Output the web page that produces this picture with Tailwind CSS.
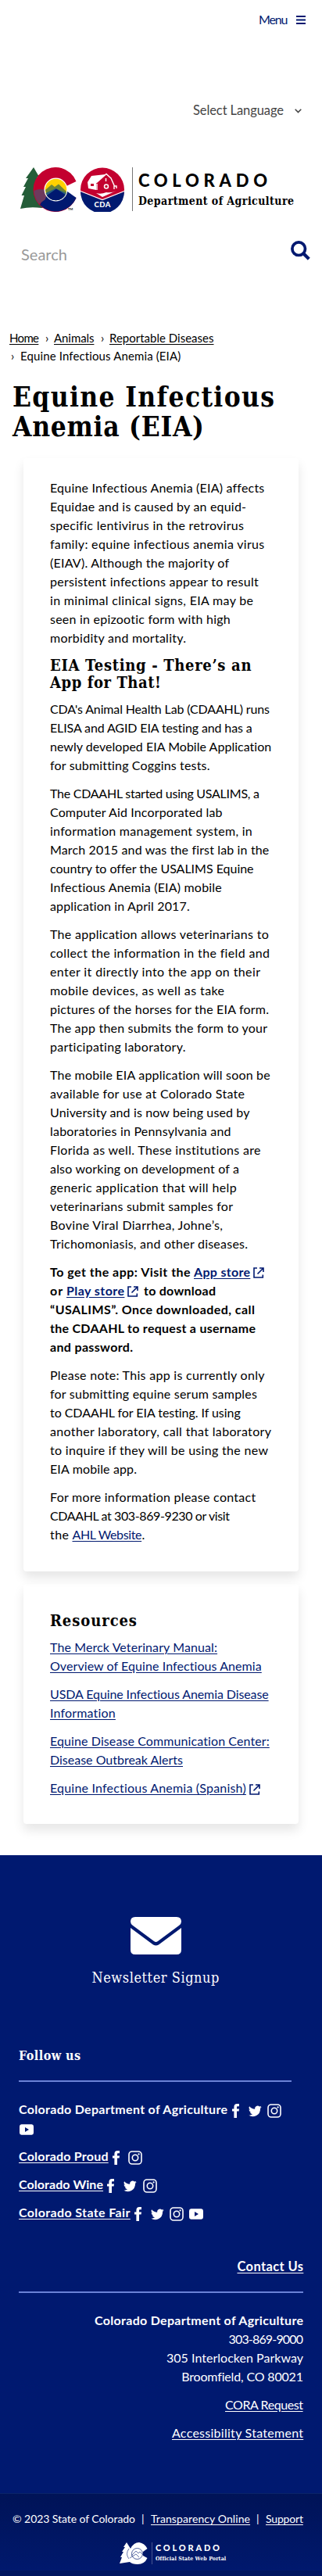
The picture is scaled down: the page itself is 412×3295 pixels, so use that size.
<!DOCTYPE html>
<html lang="en">
<head>
<meta charset="utf-8">
<title>Equine Infectious Anemia (EIA)</title>
<script src="https://cdn.jsdelivr.net/npm/@tailwindcss/browser@4"></script>
</head>
<body class="bg-white text-black font-['Lato','Noto_Sans',sans-serif] text-base leading-6 w-[412px] overflow-x-hidden">
<svg class="hidden">
  <symbol id="ext" viewBox="0 0 14 14"><path d="M5 1H1V13H12.3V9.5M8 1H13V6M13 1L5.5 8.5" fill="none" stroke="currentColor" stroke-width="1.6"/></symbol>
  <symbol id="fb" viewBox="0 0 9 18"><path d="M2.4 18V9.6H0V6.4H2.4V4.2C2.4 1.5 3.8 0 6.3 0H9V3.2H7.3C6.3 3.2 6 3.6 6 4.5V6.4H9L8.6 9.6H6V18Z" fill="currentColor"/></symbol>
  <symbol id="tw" viewBox="0 0 24 20"><path d="M23.6 2.4a9.6 9.6 0 0 1-2.8.8A4.8 4.8 0 0 0 22.9.5a9.700 9.700 0 0 1-3.100 1.200A4.850 4.850 0 0 0 11.600 6.100 13.700 13.700 0 0 1 1.600 1a4.850 4.850 0 0 0 1.500 6.500 4.800 4.800 0 0 1-2.200-.6 4.850 4.850 0 0 0 3.900 4.800 4.900 4.900 0 0 1-2.200.1 4.850 4.850 0 0 0 4.500 3.400A9.700 9.700 0 0 1 0 17.200 13.700 13.700 0 0 0 21.200 5z" fill="currentColor"/></symbol>
  <symbol id="ig" viewBox="0 0 18 18"><rect x="1" y="1" width="16" height="16" rx="4" fill="none" stroke="currentColor" stroke-width="1.600"/><circle cx="9" cy="9" r="3.700" fill="none" stroke="currentColor" stroke-width="1.600"/><circle cx="13.600" cy="4.400" r="1.100" fill="currentColor"/></symbol>
  <symbol id="yt" viewBox="0 0 18 14"><path fill-rule="evenodd" d="M2.500 .3H15.500Q18 .5 18 3V11Q18 13.500 15.500 13.700H2.500Q0 13.500 0 11V3Q0 .5 2.500 .3ZM7 4V10L12 7Z" fill="currentColor"/></symbol>
</svg>

<header class="h-[422px] flex flex-col">
  <div class="h-[50px] pt-[13px] pl-[331px] flex">
    <a class="text-[#001970] text-[16px] whitespace-nowrap w-[48px] shrink-0"><span data-w="37.5">Menu</span></a>
    <svg class="w-3 h-[11px] mt-[7px]" viewBox="0 0 12 11"><path d="M0 1H12M0 5.500H12M0 10H12" stroke="#001970" stroke-width="2"/></svg>
  </div>
  <div class="h-[164px] pt-[79px] pl-[247px] flex text-[#444]">
    <span class="whitespace-nowrap text-[16.5px] w-[130px] shrink-0"><span data-w="116">Select Language</span></span>
    <svg class="w-[9px] h-1.5 mt-[10px]" viewBox="0 0 9 6"><path d="M.7 .7L4.500 4.600L8.300 .7" fill="none" stroke="#444" stroke-width="1.500"/></svg>
  </div>
  <div class="h-[57px] pl-[25px] flex">
    <svg class="w-[144px] h-[57px] shrink-0" viewBox="0 0 144 57">
      <path d="M18 0L25 12H22.500L29 23H26L38 50L28 52Q14 50 1 53L6 36H2.500L8 25H5L11 14H8Z" fill="#245d38"/>
      <path d="M72.500 18A28.500 28.500 0 1 0 72.500 39L60 34H32V24L60 24Z" fill="#c3002f"/>
      <path d="M72.500 39A28.500 28.500 0 0 1 26 48L36 30H60Z" fill="#001970"/>
      <path d="M18.500 30Q26 26 36 30L33 41L25 47Q18.500 39 18.500 30Z" fill="#6d3a5d"/>
      <circle cx="46.500" cy="28.500" r="15" fill="#fff"/>
      <circle cx="46.500" cy="28.500" r="13.700" fill="#ffd100"/>
      <path d="M33 29L41 22L45 25L50 21.500L60 31Q59 41 46 42Q35 40 33 29Z" fill="#6b8537"/>
      <path d="M33.500 33L46 27L59.500 33Q56 42.200 46.500 42.200Q37 42.200 33.500 33Z" fill="#245d7e"/>
      <path d="M35 36L47 27.500L58.500 35Q54 42.200 46.500 42.200Q39 42.200 35 36Z" fill="#001970"/>
      <text x="62" y="55" font-size="4" font-weight="700" font-family="Lato">TM</text>
      <circle cx="106" cy="28.500" r="28" fill="#c3002f"/>
      <path d="M78 31L106 42L134 31A28 28 0 0 1 78 31Z" fill="#001970"/>
      <path d="M78 30.500L106 41.500L134 30.500" fill="none" stroke="#fff" stroke-width="1.300"/>
      <path d="M87 19L92 11L110 9L98 20V29L88 27ZM91 21V24H95V21Z" fill="#fff" fill-rule="evenodd"/>
      <path d="M98 20L111 8.500L117 14L121 23V28M99 29V21M121 24H124V27" fill="none" stroke="#fff" stroke-width="1.400"/>
      <circle cx="111" cy="24.500" r="2.500" fill="none" stroke="#fff" stroke-width="1.500"/><path d="M110.500 14V18" stroke="#fff" stroke-width="1.500"/>
      <path d="M98 33Q104 35 111 32Q118 33 124 30L106 38Z" fill="#fff"/>
      <text x="95.500" y="50.500" font-size="9.500" font-weight="900" fill="#fff" font-family="Lato" textLength="21">CDA</text>
    </svg>
    <div class="w-px bg-[#777] h-[56px] shrink-0"></div>
    <div class="pl-[7px] whitespace-nowrap">
      <div class="h-6 leading-6 pt-[5px] text-[22px] font-black"><span data-w="165">COLORADO</span></div>
      <div class="pt-[7px] text-[14px] font-bold font-['DejaVu_Serif_Condensed','DejaVu_Serif',serif]"><span data-w="199">Department of Agriculture</span></div>
    </div>
  </div>
  <div class="pl-[27px] pt-[37px] flex">
    <span class="w-[345px] shrink-0 pt-[5px] text-[20px] text-[#999]"><span data-w="59">Search</span></span>
    <svg class="w-[25px] h-[25px] shrink-0" viewBox="0 0 25 25"><circle cx="10.200" cy="10.200" r="8.300" fill="none" stroke="#001970" stroke-width="3.700"/><path d="M16 16L23.300 23.300" stroke="#001970" stroke-width="4.200"/></svg>
  </div>
</header>

<nav class="text-[15px] leading-[23px] pl-3 whitespace-nowrap h-[69px] -mt-px mb-px">
  <div class="flex"><a class="underline underline-offset-2 w-[46px] shrink-0"><span data-w="38">Home</span></a><span class="w-[11px] shrink-0">›</span><a class="underline underline-offset-2 w-[60px] shrink-0"><span data-w="51.500">Animals</span></a><span class="w-[11px] shrink-0">›</span><a class="underline underline-offset-2"><span data-w="133.500">Reportable Diseases</span></a></div>
  <div class="flex"><span class="w-[14px] shrink-0 pl-0.5">›</span><span data-w="205.500">Equine Infectious Anemia (EIA)</span></div>
</nav>

<main>
  <h1 class="text-[35px] leading-[38px] font-bold font-['DejaVu_Serif_Condensed','DejaVu_Serif',serif] pl-4 whitespace-nowrap h-[97px] -mt-0.5"><span data-w="335">Equine Infectious</span><br><span data-w="245">Anemia (EIA)</span></h1>

  <section class="mx-[30px] h-[1424px] pt-[26px] pl-[34px] shadow-[0_8px_14px_rgba(0,0,0,0.1)] rounded-sm flex flex-col gap-3 whitespace-nowrap">
    <p><span data-w="274">Equine Infectious Anemia (EIA) affects</span><br><span data-w="251">Equidae and is caused by an equid-</span><br><span data-w="248">specific lentivirus in the retrovirus</span><br><span data-w="274.500">family: equine infectious anemia virus</span><br><span data-w="229">(EIAV). Although the majority of</span><br><span data-w="267">persistent infections appear to result</span><br><span data-w="260">in minimal clinical signs, EIA may be</span><br><span data-w="231">seen in epizootic form with high</span><br><span data-w="174">morbidity and mortality.</span></p>
    <h2 class="text-[20px] leading-[22px] font-bold font-['DejaVu_Serif_Condensed','DejaVu_Serif',serif] -mb-[1.500px]"><span data-w="257.500">EIA Testing - There’s an</span><br><span data-w="142">App for That!</span></h2>
    <p><span data-w="281">CDA's Animal Health Lab (CDAAHL) runs</span><br><span data-w="259">ELISA and AGID EIA testing and has a</span><br><span data-w="283.500">newly developed EIA Mobile Application</span><br><span data-w="204">for submitting Coggins tests.</span></p>
    <p><span data-w="268">The CDAAHL started using USALIMS, a</span><br><span data-w="220.500">Computer Aid Incorporated lab</span><br><span data-w="259">information management system, in</span><br><span data-w="280">March 2015 and was the first lab in the</span><br><span data-w="260">country to offer the USALIMS Equine</span><br><span data-w="220">Infectious Anemia (EIA) mobile</span><br><span data-w="179">application in April 2017.</span></p>
    <p><span data-w="280">The application allows veterinarians to</span><br><span data-w="281">collect the information in the field and</span><br><span data-w="269">enter it directly into the app on their</span><br><span data-w="223">mobile devices, as well as take</span><br><span data-w="280">pictures of the horses for the EIA form.</span><br><span data-w="278">The app then submits the form to your</span><br><span data-w="174">participating laboratory.</span></p>
    <p><span data-w="282">The mobile EIA application will soon be</span><br><span data-w="249">available for use at Colorado State</span><br><span data-w="255.500">University and is now being used by</span><br><span data-w="231.500">laboratories in Pennsylvania and</span><br><span data-w="270">Florida as well. These institutions are</span><br><span data-w="242">also working on development of a</span><br><span data-w="239">generic application that will help</span><br><span data-w="234">veterinarians submit samples for</span><br><span data-w="221">Bovine Viral Diarrhea, Johne’s,</span><br><span data-w="253">Trichomoniasis, and other diseases.</span></p>
    <p class="font-bold"><span data-w="184">To get the app: Visit the&nbsp;</span><a class="underline underline-offset-2 text-[#001970]"><span data-w="72">App store</span></a><svg class="inline w-[14px] h-[14px] ml-1 text-[#001970]"><use href="#ext"/></svg><br><span data-w="21">or&nbsp;</span><a class="underline underline-offset-2 text-[#001970]"><span data-w="74">Play store</span></a><svg class="inline w-[14px] h-[14px] ml-1 mr-[7px] text-[#001970]"><use href="#ext"/></svg><span data-w="92">to download</span><br><span data-w="262">“USALIMS”. Once downloaded, call</span><br><span data-w="263">the CDAAHL to request a username</span><br><span data-w="106">and password.</span></p>
    <p><span data-w="274.500">Please note: This app is currently only</span><br><span data-w="264.500">for submitting equine serum samples</span><br><span data-w="244">to CDAAHL for EIA testing. If using</span><br><span data-w="283">another laboratory, call that laboratory</span><br><span data-w="279">to inquire if they will be using the new</span><br><span data-w="111">EIA mobile app.</span></p>
    <p><span data-w="263.500">For more information please contact</span><br><span data-w="230">CDAAHL at 303-869-9230 or visit</span><br><span data-w="28.500">the&nbsp;</span><a class="underline underline-offset-2 text-[#001970]"><span data-w="89">AHL Website</span></a>.</p>
  </section>

  <section class="mx-[30px] mt-4 h-[307px] pt-[36px] pl-[34px] shadow-[0_8px_14px_rgba(0,0,0,0.1)] rounded-sm whitespace-nowrap">
    <h2 class="text-[20px] leading-[22px] font-bold font-['DejaVu_Serif_Condensed','DejaVu_Serif',serif] mb-[11px]"><span data-w="111">Resources</span></h2>
    <ul class="flex flex-col gap-3 text-[#001970]">
      <li class="underline underline-offset-2"><span data-w="214">The Merck Veterinary Manual:</span><br><span data-w="271">Overview of Equine Infectious Anemia</span></li>
      <li class="underline underline-offset-2"><span data-w="280">USDA Equine Infectious Anemia Disease</span><br><span data-w="84">Information</span></li>
      <li class="underline underline-offset-2"><span data-w="281">Equine Disease Communication Center:</span><br><span data-w="170">Disease Outbreak Alerts</span></li>
      <li><a class="underline underline-offset-2"><span data-w="251">Equine Infectious Anemia (Spanish)</span></a><svg class="inline w-[14px] h-[14px] ml-1"><use href="#ext"/></svg></li>
    </ul>
  </section>
</main>

<footer class="mt-10 bg-[#001970] text-white h-[922px] whitespace-nowrap">
  <div class="h-[245px] pt-[79px] pr-[14px] flex flex-col items-center font-['DejaVu_Serif_Condensed','DejaVu_Serif',serif]">
    <svg class="w-[65px] h-12 shrink-0" viewBox="0 0 65 48"><path d="M6 0H59Q65 0 65 6Q65 9 62 11L35 31Q32.500 33 30 31L3 11Q0 9 0 6Q0 0 6 0ZM0 14L29 35.500Q32.500 37.500 36 35.500L65 14V42Q65 48 59 48H6Q0 48 0 42Z" fill="#fff"/></svg>
    <div class="pt-[18px] text-[18px] leading-6"><span data-w="163">Newsletter Signup</span></div>
  </div>
  <div class="px-6">
    <div class="h-[43px] font-bold text-[16px] leading-6 font-['DejaVu_Serif_Condensed','DejaVu_Serif',serif]"><span data-w="79">Follow us</span></div>
    <div class="w-[349px] h-0.5 bg-[#6b82d6]"></div>
    <div class="pt-[23px] font-bold flex flex-col gap-3">
      <div class="h-12"><div class="flex h-6"><span class="w-[273px] shrink-0"><span data-w="267">Colorado Department of Agriculture</span></span><svg class="w-[9px] h-[18px] mt-[5px]"><use href="#fb"/></svg><svg class="w-[17px] h-[15px] mt-[7px] ml-3"><use href="#tw"/></svg><svg class="w-[18px] h-[18px] mt-[5px] ml-[7px]"><use href="#ig"/></svg></div><svg class="w-[18px] h-[14px] mt-[7px] ml-px"><use href="#yt"/></svg></div>
      <div class="flex h-6"><a class="underline underline-offset-2 w-[120px] shrink-0"><span data-w="114.500">Colorado Proud</span></a><svg class="w-[9px] h-[18px] mt-[5px]"><use href="#fb"/></svg><svg class="w-[18px] h-[18px] mt-[5px] ml-[11px]"><use href="#ig"/></svg></div>
      <div class="flex h-6"><a class="underline underline-offset-2 w-[113px] shrink-0"><span data-w="108">Colorado Wine</span></a><svg class="w-[9px] h-[18px] mt-[5px]"><use href="#fb"/></svg><svg class="w-[17px] h-[15px] mt-[7px] ml-3"><use href="#tw"/></svg><svg class="w-[18px] h-[18px] mt-[5px] ml-2"><use href="#ig"/></svg></div>
      <div class="flex h-6"><a class="underline underline-offset-2 w-[148px] shrink-0"><span data-w="142.500">Colorado State Fair</span></a><svg class="w-[9px] h-[18px] mt-[5px]"><use href="#fb"/></svg><svg class="w-[17px] h-[15px] mt-[7px] ml-3"><use href="#tw"/></svg><svg class="w-[18px] h-[18px] mt-[5px] ml-[7px]"><use href="#ig"/></svg><svg class="w-[18px] h-[14px] mt-[7px] ml-[7px]"><use href="#yt"/></svg></div>
    </div>
    <div class="h-11 mt-[45px] text-right font-bold text-[16.5px]"><a class="underline underline-offset-2"><span data-w="84.500">Contact Us</span></a></div>
    <div class="h-0.5 bg-[#6b82d6]"></div>
    <div class="pt-[23px] text-right">
      <div class="font-bold"><span data-w="267">Colorado Department of Agriculture</span></div>
      <div><span data-w="95.500">303-869-9000</span></div>
      <div><span data-w="175">305 Interlocken Parkway</span></div>
      <div><span data-w="155.500">Broomfield, CO 80021</span></div>
      <div class="pt-3"><a class="underline underline-offset-2"><span data-w="100">CORA Request</span></a></div>
      <div class="pt-3 h-[101px]"><a class="underline underline-offset-2"><span data-w="168">Accessibility Statement</span></a></div>
    </div>
  </div>
  <div class="h-[110px] bg-linear-to-b from-[#001357] to-[#001970] border-t border-[#0a2468] text-[14px] pt-5">
    <div class="flex pl-4"><span class="w-[165px] shrink-0"><span data-w="157">© 2023 State of Colorado</span></span><span class="w-3 shrink-0">|</span><a class="underline underline-offset-2 w-[135px] shrink-0"><span data-w="127">Transparency Online</span></a><span class="w-3 shrink-0">|</span><a class="underline underline-offset-2"><span data-w="48">Support</span></a></div>
    <div class="flex pl-[153px] pt-[18px] h-[54px]">
      <svg class="w-9 h-7 shrink-0" viewBox="0 0 36 28"><path d="M9 0L14 8Q18 0 25 0Q32 1 35.500 8L30 12V17L35.500 20Q32 28 23 28Q16 28 13 25L0 27L3 19H1L5 12H3L7 6H5Z" fill="#fff"/><circle cx="22.500" cy="14.500" r="7" fill="none" stroke="#001970" stroke-width=".7"/><path d="M15 17L21 11L24 14L26 12L30 16M13 20L21 15L25 19M12 8Q7 15 12 21" fill="none" stroke="#001970" stroke-width=".6"/></svg>
      <div class="w-px h-7 ml-[5px] bg-[#4a5590] shrink-0"></div>
      <div class="pl-1 leading-[14px]">
        <div class="text-[11px] font-black"><span data-w="82">COLORADO</span></div>
        <div class="text-[7px] font-bold leading-[13px] font-['DejaVu_Serif_Condensed','DejaVu_Serif',serif]"><span data-w="90">Official State Web Portal</span></div>
      </div>
    </div>
    <div class="h-[10px] bg-[#00155f]"></div>
  </div>
</footer>
<script>
function fitLines() {
  document.querySelectorAll('[data-w]').forEach(function (el) {
    el.style.letterSpacing = '0px';
    el.style.marginRight = '0px';
    var target = parseFloat(el.dataset.w), n = Array.from(el.textContent).length;
    var track = (target - el.getBoundingClientRect().width) / (n - 1);
    el.style.letterSpacing = track + 'px';
    el.style.marginRight = -track + 'px';
  });
}
fitLines();
window.addEventListener('load', function () {
  fitLines();
  requestAnimationFrame(fitLines);
  setTimeout(fitLines, 60);
});
document.fonts.ready.then(fitLines);
</script>
</body>
</html>
